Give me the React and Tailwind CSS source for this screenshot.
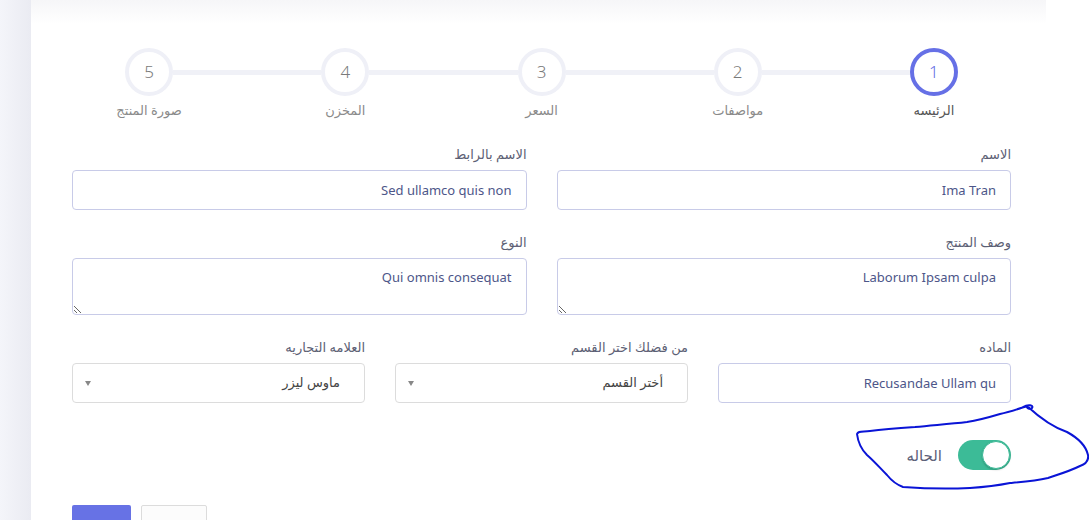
import React from "react";

const steps = [
  { n: "1", label: "الرئيسه", active: true },
  { n: "2", label: "مواصفات" },
  { n: "3", label: "السعر" },
  { n: "4", label: "المخزن" },
  { n: "5", label: "صورة المنتج" },
];

const font = { fontFamily: '"Noto Sans", "DejaVu Sans", sans-serif' };

function Label({ children }) {
  return (
    <div className="h-[18px] mb-[7px] text-[13px] leading-[18px] text-[#5c6074]">{children}</div>
  );
}

function TextInput({ value }) {
  return (
    <input
      dir="rtl"
      readOnly
      defaultValue={value}
      className="block w-full h-[40px] rounded-[4px] border border-[#c8cbe8] bg-white px-[14px] text-[13px] text-[#4d5689] outline-none"
      style={font}
    />
  );
}

function TextArea({ value }) {
  return (
    <textarea
      dir="rtl"
      readOnly
      defaultValue={value}
      className="block w-full h-[57px] rounded-[4px] border border-[#c8cbe8] bg-white px-[14px] pt-[8px] text-[13px] leading-[20px] text-[#4d5689] outline-none"
      style={font}
    />
  );
}

function Select({ value }) {
  return (
    <div className="flex h-[40px] items-center justify-between rounded-[4px] border border-[#dcdcdc] bg-white pr-[24px] pl-[12px]">
      <span className="text-[13px] text-[#444]">{value}</span>
      <span className="block h-0 w-0 border-l-[3.5px] border-r-[3.5px] border-t-[5px] border-l-transparent border-r-transparent border-t-[#888]" />
    </div>
  );
}

export default function App() {
  return (
    <div className="relative flex h-[520px] w-full overflow-hidden bg-white" style={font}>
      <div className="w-[31px] shrink-0 bg-gradient-to-r from-[#f4f5fa] to-[#eaebf2]" />
      <div className="w-[1015px] shrink-0 bg-white">
        <div className="h-[24px] bg-gradient-to-b from-[#f6f6f8] to-white" />
        <div dir="rtl" className="pr-[35px] pl-[41px]">
          {/* stepper */}
          <div className="mx-[-21px] mt-[24px] grid grid-cols-5">
            {steps.map((s, i) => (
              <div key={s.n} className="flex flex-col items-center">
                <div className="flex w-full items-center">
                  <div className={`h-[5px] flex-1 ${i === 0 ? "" : "bg-[#f0f1f7]"}`} />
                  <div
                    className={`flex h-[48px] w-[48px] items-center justify-center rounded-full border-[4px] bg-white text-[17px] font-light ${
                      s.active ? "border-[#6670e6] text-[#6670e6]" : "border-[#eff0f7] text-[#7a7a7a]"
                    }`}
                  >
                    {s.n}
                  </div>
                  <div className={`h-[5px] flex-1 ${i === 4 ? "" : "bg-[#f0f1f7]"}`} />
                </div>
                <div
                  className={`mt-[4px] text-[13px] leading-[20px] ${
                    s.active ? "text-[#555]" : "text-[#8a8a8a]"
                  }`}
                >
                  {s.label}
                </div>
              </div>
            ))}
          </div>

          {/* row 1 */}
          <div className="mt-[25px] grid grid-cols-2 gap-x-[30px]">
            <div>
              <Label>الاسم</Label>
              <TextInput value="Ima Tran" />
            </div>
            <div>
              <Label>الاسم بالرابط</Label>
              <TextInput value="Sed ullamco quis non" />
            </div>
          </div>

          {/* row 2 */}
          <div className="mt-[23px] grid grid-cols-2 gap-x-[30px]">
            <div>
              <Label>وصف المنتج</Label>
              <TextArea value="Laborum Ipsam culpa" />
            </div>
            <div>
              <Label>النوع</Label>
              <TextArea value="Qui omnis consequat" />
            </div>
          </div>

          {/* row 3 */}
          <div className="mt-[23px] grid grid-cols-3 gap-x-[30px]">
            <div>
              <Label>الماده</Label>
              <TextInput value="Recusandae Ullam qu" />
            </div>
            <div>
              <Label>من فضلك اختر القسم</Label>
              <Select value="أختر القسم" />
            </div>
            <div>
              <Label>العلامه التجاريه</Label>
              <Select value="ماوس ليزر" />
            </div>
          </div>

          {/* toggle */}
          <div className="mt-[37px] flex items-center gap-[16px]">
            <div className="flex h-[30px] w-[53px] items-center justify-start rounded-full bg-[#3cbb97] pr-[1px]">
              <div className="h-[28px] w-[28px] rounded-full border border-[#3cbb97] bg-white shadow-[0_1px_2px_rgba(0,0,0,0.2)]" />
            </div>
            <span className="text-[15px] text-[#5c6078]">الحاله</span>
          </div>

          {/* buttons */}
          <div dir="ltr" className="mt-[35px] flex gap-[10px]">
            <div className="h-[30px] w-[59px] rounded-[2px] bg-[#6772e5]" />
            <div className="h-[30px] w-[66px] rounded-[2px] border border-[#dcdcdc] bg-[#fcfcfc]" />
          </div>
        </div>
      </div>
      <div className="flex-1 bg-white" />

      <svg
        className="pointer-events-none absolute left-0 top-0"
        width="1089"
        height="520"
        viewBox="0 0 1089 520"
      >
        <path
          d="M1023 407 C1028 404 1034 405 1032 408 C1030 410 1026 408 1027 406 C1040 418 1055 428 1067 432 C1078 438 1086 446 1088 455 C1089 461 1086 464 1080 466 C1070 471 1060 474 1048 478 C1035 481 1022 482 1010 483 C995 486 985 487 970 488 C950 489 930 489 903 487 C895 484 891 480 887 475 C880 468 874 461 867 455 C861 449 858 442 857 434 C858 431 862 432 870 431 C885 429 900 428 915 427 C935 425 950 424 967 422 C980 420 990 417 1000 414 C1010 412 1018 409 1027 406"
          fill="none"
          stroke="#0a14d6"
          strokeWidth="2"
          strokeLinecap="round"
          strokeLinejoin="round"
        />
      </svg>
    </div>
  );
}
